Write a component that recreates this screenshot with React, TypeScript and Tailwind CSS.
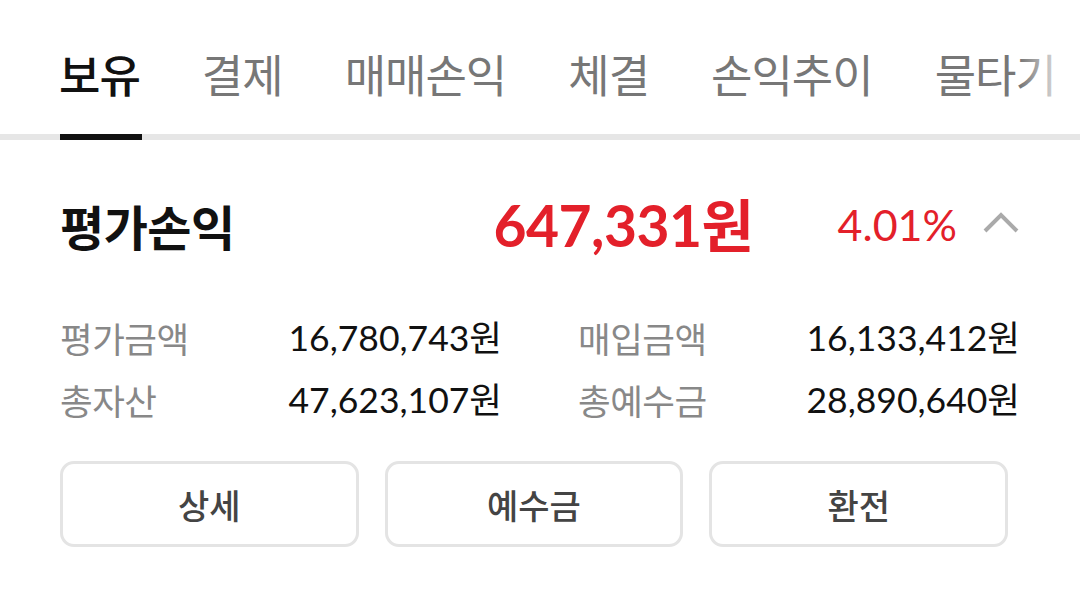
import { useState } from "react";

const tabs = ["보유", "결제", "매매손익", "체결", "손익추이", "물타기"];

const rows = [
  [
    { label: "평가금액", value: "16,780,743원" },
    { label: "매입금액", value: "16,133,412원" },
  ],
  [
    { label: "총자산", value: "47,623,107원" },
    { label: "총예수금", value: "28,890,640원" },
  ],
];

const kr = "font-['Noto_Sans_CJK_KR',sans-serif]";
const num = "font-['Lato','Noto_Sans_CJK_KR',sans-serif]";

function ChevronUp() {
  return (
    <svg width="38" height="24" viewBox="0 0 38 24" fill="none">
      <path d="M3 21 L19 5 L35 21" stroke="#aaaaaa" strokeWidth="4" />
    </svg>
  );
}

export default function App() {
  const [active, setActive] = useState(0);

  return (
    <div className={`h-[597px] w-[1080px] overflow-hidden bg-white ${kr}`}>
      {/* tabs */}
      <div className="relative border-b-[6px] border-[#e6e6e6]">
        <div className="flex gap-[62px] whitespace-nowrap pl-[59px]">
          {tabs.map((tab, i) => (
            <button
              key={tab}
              onClick={() => setActive(i)}
              className={`relative -mb-[6px] pb-[43px] pt-[51px] text-[45px] leading-[46px] tracking-[-1px] ${
                i === active ? "font-medium text-[#111]" : "text-[#777]"
              }`}
            >
              {tab}
              {i === active && (
                <span className="absolute bottom-0 left-[1px] right-[-2px] h-[6px] bg-[#111]" />
              )}
            </button>
          ))}
        </div>
        <div className="pointer-events-none absolute right-0 top-0 h-full w-[60px] bg-gradient-to-r from-white/0 via-white/60 to-white" />
      </div>

      {/* 평가손익 */}
      <div className="flex items-center px-[60px] pt-[57px]">
        <div className="text-[48px] font-bold leading-[56px] tracking-[-0.5px] text-[#111]">평가손익</div>
        <div className={`ml-auto text-[57px] font-bold leading-[56px] tracking-[-0.5px] text-[#e3202a] ${num}`}>
          647,331원
        </div>
        <div className={`ml-[84px] text-[43px] leading-[56px] text-[#e3202a] ${num}`}>4.01%</div>
        <div className="ml-[25px] mt-[-6px] flex items-center">
          <ChevronUp />
        </div>
      </div>

      {/* 상세 수치 */}
      <div className="mt-[64px] flex flex-col gap-[20px] px-[60px]">
        {rows.map((row, r) => (
          <div key={r} className="grid grid-cols-2 gap-x-[76px]">
            {row.map((cell) => (
              <div key={cell.label} className="flex items-center justify-between">
                <span className="text-[35.5px] leading-[42px] tracking-[-0.5px] text-[#888]">{cell.label}</span>
                <span className={`text-[35.5px] leading-[42px] text-[#111] ${num}`}>{cell.value}</span>
              </div>
            ))}
          </div>
        ))}
      </div>

      {/* 버튼 */}
      <div className="mt-[40px] grid grid-cols-3 gap-[26px] pl-[60px] pr-[72px]">
        {["상세", "예수금", "환전"].map((label) => (
          <button
            key={label}
            className="h-[86px] rounded-[14px] border-[3px] border-[#e4e4e4] bg-white text-[34px] font-medium text-[#444]"
          >
            {label}
          </button>
        ))}
      </div>
    </div>
  );
}
